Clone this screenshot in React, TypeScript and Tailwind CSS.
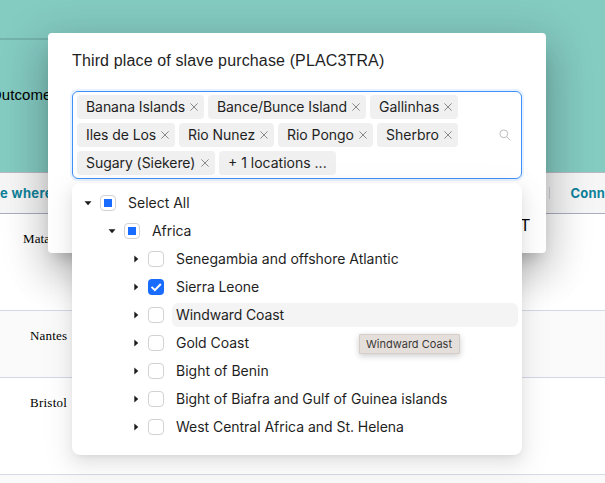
import React from "react";

type Node = { label: string; depth: number; state: "some" | "on" | "off"; open?: boolean; hover?: boolean; text: string };

const tags = [
  { label: "Banana Islands", box: "w-[127px]", text: "tracking-[-0.06px]" },
  { label: "Bance/Bunce Island", box: "w-[158px]", text: "tracking-[-0.09px]" },
  { label: "Gallinhas", box: "w-[88px]", text: "tracking-[0px]" },
  { label: "Iles de Los", box: "w-[98px]", text: "tracking-[-0.08px]" },
  { label: "Rio Nunez", box: "w-[95px]", text: "tracking-[-0.04px]" },
  { label: "Rio Pongo", box: "w-[95px]", text: "tracking-[-0.04px]" },
  { label: "Sherbro", box: "w-[81px]", text: "tracking-[0px]" },
  { label: "Sugary (Siekere)", box: "w-[138px]", text: "tracking-[-0.06px]" },
];

const nodes: Node[] = [
  { label: "Select All", depth: 0, state: "some", open: true, text: "tracking-[0px]" },
  { label: "Africa", depth: 1, state: "some", open: true, text: "tracking-[-0.05px]" },
  { label: "Senegambia and offshore Atlantic", depth: 2, state: "off", text: "tracking-[-0.02px]" },
  { label: "Sierra Leone", depth: 2, state: "on", text: "tracking-[-0.08px]" },
  { label: "Windward Coast", depth: 2, state: "off", hover: true, text: "tracking-[-0.1px]" },
  { label: "Gold Coast", depth: 2, state: "off", text: "tracking-[-0.04px]" },
  { label: "Bight of Benin", depth: 2, state: "off", text: "tracking-[0px]" },
  { label: "Bight of Biafra and Gulf of Guinea islands", depth: 2, state: "off", text: "tracking-[-0.02px]" },
  { label: "West Central Africa and St. Helena", depth: 2, state: "off", text: "tracking-[-0.03px]" },
];

const indents = ["pl-1", "pl-7", "pl-[52px]"];

function Checkbox({ state }: { state: Node["state"] }) {
  if (state === "on")
    return (
      <span className="flex size-4 shrink-0 items-center justify-center rounded bg-[#1a6cff]">
        <svg viewBox="0 0 16 16" className="size-4" fill="none" stroke="white" strokeWidth="2">
          <path d="M3.5 7.9 6.9 11.2 12.8 5" />
        </svg>
      </span>
    );
  return (
    <span className="flex size-4 shrink-0 items-center justify-center rounded border border-[#d2d2d2] bg-white">
      {state === "some" && <span className="size-2 bg-[#1a6cff]" />}
    </span>
  );
}

function TreeRow({ node }: { node: Node }) {
  return (
    <div className={`flex h-6 items-center ${indents[node.depth]}`}>
      <span className="flex w-6 shrink-0 items-center justify-center">
        <svg viewBox="0 0 10 10" className="size-[10px]" fill="#1c1c1c">
          {node.open ? <path d="M1.5 3.2h7L5 7.2z" /> : <path d="M3.3 1.6v6.8L7.3 5z" />}
        </svg>
      </span>
      <Checkbox state={node.state} />
      <span className={`ml-2 h-6 flex-1 rounded-md pl-1 leading-6 whitespace-nowrap ${node.text} ${node.hover ? "bg-[#f4f4f4]" : ""}`}>
        {node.label}
      </span>
    </div>
  );
}

function Tag({ label, box, text }: { label: string; box: string; text: string }) {
  return (
    <span className={`flex h-6 shrink-0 items-center justify-between rounded bg-[#f0f0f0] pr-[5px] pl-[9px] ${box}`}>
      <span className={`leading-6 whitespace-nowrap ${text}`}>{label}</span>
      <svg viewBox="0 0 10 10" className="size-[10px] shrink-0" fill="none" stroke="#7d7d7d" strokeWidth="0.9">
        <path d="M1.4 1.4 8.6 8.6M8.6 1.4 1.4 8.6" />
      </svg>
    </span>
  );
}

function Background() {
  return (
    <div className="flex h-full flex-col">
      <div className="h-[172px] bg-[#84cbc2] font-['Liberation_Sans',sans-serif]">
        <div className="h-[38px]" />
        <div className="h-[2px] w-[300px] bg-[#74b4ad]" />
        <div className="-ml-[10px] pt-[45px] text-[15px] leading-5 tracking-[0.1px] text-black">Outcome</div>
      </div>
      <div className="flex h-[42px] items-center justify-between border-t border-b border-t-[#b7babf] border-b-[#a9adbd] bg-[#f6f6f6] text-[13px] font-bold text-[#0f829b]">
        <span className="pt-0.5 tracking-[0.35px]">e where</span>
        <div className="flex w-[56px] items-center">
          <span className="h-3 w-[2px] bg-[#ced1dc]" />
          <span className="ml-[21px] pt-0.5 tracking-[0.2px]">Conn</span>
        </div>
      </div>
      <div className="font-['Liberation_Serif',serif] text-[13px] leading-4 text-black">
        <div className="h-[97px] border-b border-[#d3d8e6] pt-[17px] pl-[23px] tracking-[0.1px]">Mata</div>
        <div className="h-[67px] border-b border-[#d3d5e9] bg-[#fafafa] pt-[17px] pl-[30px] tracking-[0.2px]">Nantes</div>
        <div className="h-[97px] border-b border-[#d3dbe6] pt-[17px] pl-[30px] tracking-[0.25px]">Bristol</div>
        <div className="h-2 bg-[#fafafa]" />
      </div>
    </div>
  );
}

export default function App() {
  return (
    <main className="relative h-[483px] w-[605px] overflow-hidden bg-white font-['Inter',sans-serif] text-[14px] text-[#1f1f1f]">
      <Background />
      <section className="absolute top-[33px] left-[48px] h-[220px] w-[498px] rounded bg-white px-6 pt-4 shadow-[0_11px_15px_-7px_rgba(0,0,0,0.2),0_24px_38px_3px_rgba(0,0,0,0.14),0_9px_46px_8px_rgba(0,0,0,0.12)]">
        <h1 className="h-[42px] font-['Liberation_Sans',sans-serif] text-[16px] leading-6 tracking-[0.14px] whitespace-nowrap">Third place of slave purchase (PLAC3TRA)</h1>
        <div className="flex h-[88px] w-[450px] items-center justify-between rounded-md border border-[#4090f7] py-[3px] pr-[10px] pl-1 shadow-[0_0_0_2px_rgba(5,125,255,0.1)]">
          <div className="flex w-[384px] flex-wrap gap-1">
            {tags.map((tag) => (
              <Tag key={tag.label} {...tag} />
            ))}
            <span className="h-6 w-[117px] rounded bg-[#f0f0f0] pl-[9px] leading-6 whitespace-nowrap">+ 1 locations ...</span>
          </div>
          <svg viewBox="0 0 12 12" className="size-3" fill="none" stroke="#bdbdbd" strokeWidth="1">
            <circle cx="4.8" cy="4.8" r="3.9" />
            <path d="M7.7 7.7 11.3 11.3" />
          </svg>
        </div>
        <div className="flex justify-end pt-[37px] text-[16px] leading-5 text-black">
          <span className="-mr-2 font-['Liberation_Sans',sans-serif]">RESET</span>
        </div>
      </section>
      <section className="absolute top-[183px] left-[72px] flex h-[272px] w-[450px] flex-col gap-1 rounded-lg bg-white py-2 pr-1 shadow-[0_6px_16px_0_rgba(0,0,0,0.08),0_3px_6px_-4px_rgba(0,0,0,0.12),0_9px_28px_8px_rgba(0,0,0,0.05)]">
        {nodes.map((node) => (
          <TreeRow key={node.label} node={node} />
        ))}
      </section>
      <div className="absolute top-[334px] left-[359px] h-5 w-[101px] rounded-[1px] border border-[#d3ceca] bg-[#e5dfdb] pl-[6px] text-[11px] leading-[18px] whitespace-nowrap text-[#3b3938] shadow-[0_2px_6px_rgba(0,0,0,0.2)]">
        Windward Coast
      </div>
    </main>
  );
}
